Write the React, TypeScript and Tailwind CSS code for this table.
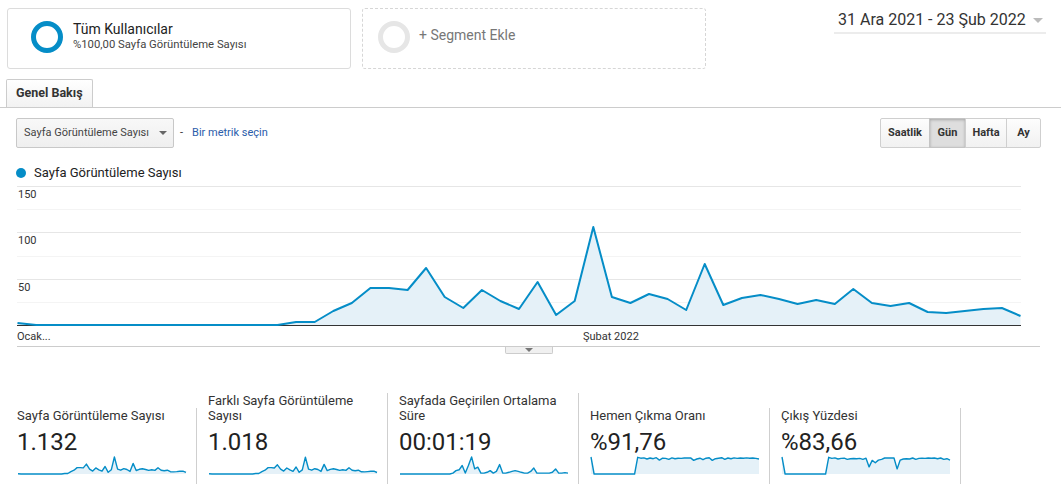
import React from "react";

const BLUE = "#058dc7";

const main = [2, 0, 0, 0, 0, 0, 0, 0, 0, 0, 0, 0, 0, 0, 0, 3, 3, 14, 22, 37, 37, 35, 57, 28, 17, 35, 24, 16, 43, 10, 24, 98, 28, 22, 31, 26, 15, 61, 20, 27, 30, 26, 21, 25, 21, 36, 22, 19, 22, 13, 12, 14, 16, 17, 9];

const card2 = main.map((v, i) => (i === 22 ? 50 : i === 28 ? 38 : i === 37 ? 52 : v * 0.93));

const card3 = [0, 0, 0, 0, 0, 0, 0, 0, 0, 0, 0, 0, 0, 0, 0, 0, 0, 0.05, 0.2, 0.25, 0.5, 0.05, 0.5, 1.0, 0.3, 0.4, 0.05, 0.05, 0.1, 0.2, 0.05, 0.15, 0.55, 0.05, 0.05, 0.1, 0.15, 0.2, 0.15, 0.1, 0.05, 0.05, 0.15, 0.35, 0.05, 0.05, 0.05, 0.05, 0.05, 0.1, 0.3, 0.05, 0.05, 0.08, 0.05];

const card4 = [1, 0, 0, 0, 0, 0, 0, 0, 0, 0, 0, 0, 0, 0, 0, 0.98, 0.93, 0.95, 0.88, 0.94, 0.9, 0.96, 0.82, 0.93, 0.92, 0.86, 0.95, 0.9, 0.93, 0.92, 0.94, 0.94, 0.95, 0.8, 0.88, 0.93, 0.84, 0.93, 0.96, 0.8, 0.9, 0.93, 0.96, 0.86, 0.94, 0.9, 0.95, 0.92, 0.94, 0.93, 0.95, 0.93, 0.94, 0.92, 0.88];

const card5 = [1, 0, 0, 0, 0, 0, 0, 0, 0, 0, 0, 0, 0, 0, 0, 0.98, 0.92, 0.95, 0.88, 0.92, 0.93, 0.86, 0.9, 0.91, 0.9, 0.92, 0.86, 0.93, 0.42, 0.8, 0.66, 0.82, 0.86, 0.94, 0.94, 0.94, 0.94, 0.3, 0.82, 0.88, 0.9, 0.88, 0.94, 0.86, 0.92, 0.93, 0.92, 0.94, 0.93, 0.94, 0.9, 0.94, 0.86, 0.9, 0.82];

function build(vals: number[], w: number, x0: number, base: number, scale: number) {
  const n = vals.length;
  const step = w / (n - 1);
  const pts = vals.map((v, i) => [x0 + i * step, base - v * scale]);
  const line = pts.map((q, i) => `${i ? "L" : "M"}${q[0].toFixed(1)},${q[1].toFixed(1)}`).join("");
  const area = `${line}L${(x0 + w).toFixed(1)},${base}L${x0},${base}Z`;
  return { line, area };
}

function Spark({ vals, max }: { vals: number[]; max: number }) {
  const { line, area } = build(vals, 168, 1, 18, 17 / max);
  return (
    <svg width="170" height="20" viewBox="0 0 170 20" className="block">
      <path d={area} fill="#e5f1f8" />
      <path d={line} fill="none" stroke={BLUE} strokeWidth="1.4" strokeLinejoin="round" />
    </svg>
  );
}

function Card({ title, value, children }: { title: string; value: string; children: React.ReactNode }) {
  return (
    <div className="w-[191px] border-r border-[#cfcfcf] pl-[11px] pr-[9px] pb-[8px]">
      <div className="text-[13px] leading-[15px] text-[#333]">{title}</div>
      <div className="mt-[5px] text-[24px] leading-[28px] text-[#222]">{value}</div>
      {children}
    </div>
  );
}

function MainChart() {
  const { line, area } = build(main, 1003, 0.5, 139, 1);
  const grid = [
    { y: 0.5, c: "#e6e6e6" },
    { y: 23.5, c: "#f4f4f4" },
    { y: 46.5, c: "#e6e6e6" },
    { y: 70.5, c: "#f4f4f4" },
    { y: 93.5, c: "#e6e6e6" },
    { y: 116.5, c: "#f4f4f4" },
  ];
  return (
    <svg width="1004" height="140" viewBox="0 0 1004 140" className="block">
      {grid.map((g) => (
        <line key={g.y} x1="0" x2="1004" y1={g.y} y2={g.y} stroke={g.c} strokeWidth="1" />
      ))}
      <path d={area} fill="#e5f1f8" />
      <line x1="0" x2="1004" y1="139.5" y2="139.5" stroke="#333" strokeWidth="1" />
      <path d={line} fill="none" stroke={BLUE} strokeWidth="2" strokeLinejoin="round" />
    </svg>
  );
}

export default function App() {
  return (
    <div className="w-[1061px] h-[502px] bg-white overflow-hidden font-['Roboto','Liberation_Sans',sans-serif] text-[#333]">
      {/* top row */}
      <div className="flex items-start pt-[8px] pl-[7px]">
        <div className="w-[344px] h-[61px] border border-[#dcdcdc] rounded-[3px] flex items-start pt-[11px] pl-[23px]">
          <div className="mt-[1px] w-[32px] h-[32px] rounded-full border-[5px] border-[#058dc7]" />
          <div className="ml-[10px]">
            <div className="text-[14px] leading-[18px] text-[#222]">Tüm Kullanıcılar</div>
            <div className="text-[11.3px] leading-[13px] text-[#444]">%100,00 Sayfa Görüntüleme Sayısı</div>
          </div>
        </div>
        <div className="ml-[11px] w-[344px] h-[61px] border border-dashed border-[#d6d6d6] rounded-[3px] flex items-start pt-[12px] pl-[15px]">
          <div className="w-[32px] h-[32px] rounded-full border-[5px] border-[#e6e6e6]" />
          <div className="ml-[9px] mt-[5px] text-[14px] leading-[18px] text-[#777]">+ Segment Ekle</div>
        </div>
        <div className="ml-auto mr-[15px] mt-[2px] w-[212px] h-[24px] border-b-2 border-[#ececec] flex items-start pl-[4px]">
          <span className="whitespace-nowrap text-[16px] leading-[19px] text-[#333]">31 Ara 2021 - 23 Şub 2022</span>
          <span className="ml-auto mr-[3px] mt-[8px] w-0 h-0 border-l-[5px] border-r-[5px] border-t-[5px] border-l-transparent border-r-transparent border-t-[#bbb]" />
        </div>
      </div>

      {/* tabs */}
      <div className="mt-[10px] border-b border-[#cccccc] pl-[6px] flex">
        <div className="h-[28px] px-[9px] border border-b-0 border-[#cccccc] rounded-t-[2px] bg-gradient-to-b from-white to-[#f2f2f2] text-[12.5px] font-bold text-[#333] flex items-center">
          Genel Bakış
        </div>
      </div>

      {/* controls */}
      <div className="mt-[10px] flex items-center pl-[16px] pr-[20px] h-[30px]">
        <div className="w-[158px] h-[30px] border border-[#c8c8c8] rounded-[2px] bg-gradient-to-b from-[#f8f8f8] to-[#efefef] flex items-center pl-[7px] text-[11px] text-[#444]">
          <span>Sayfa Görüntüleme Sayısı</span>
          <span className="ml-auto mr-[6px] w-0 h-0 border-l-[4px] border-r-[4px] border-t-[4px] border-l-transparent border-r-transparent border-t-[#666]" />
        </div>
        <span className="ml-[6px] text-[11px] text-[#333]">-</span>
        <span className="ml-[9px] text-[11px] text-[#2a5caa]">Bir metrik seçin</span>
        <div className="ml-auto flex text-[11px] font-bold text-[#333]">
          <div className="w-[50px] h-[30px] border border-[#cfcfcf] rounded-l-[2px] bg-gradient-to-b from-[#fdfdfd] to-[#f1f1f1] flex items-center justify-center">Saatlik</div>
          <div className="-ml-px w-[37px] h-[30px] border border-[#c4c4c4] bg-[#dedede] shadow-[inset_0_1px_3px_rgba(0,0,0,0.25)] flex items-center justify-center">Gün</div>
          <div className="-ml-px w-[42px] h-[30px] border border-[#cfcfcf] bg-gradient-to-b from-[#fdfdfd] to-[#f1f1f1] flex items-center justify-center">Hafta</div>
          <div className="-ml-px w-[35px] h-[30px] border border-[#cfcfcf] rounded-r-[2px] bg-gradient-to-b from-[#fdfdfd] to-[#f1f1f1] flex items-center justify-center">Ay</div>
        </div>
      </div>

      {/* legend */}
      <div className="mt-[17px] flex items-center pl-[16px] h-[16px]">
        <span className="w-[10px] h-[10px] rounded-full bg-[#058dc7]" />
        <span className="ml-[8px] text-[13px] leading-[16px] text-[#222]">Sayfa Görüntüleme Sayısı</span>
      </div>

      {/* chart */}
      <div className="mt-[5px] ml-[17px] w-[1023px] relative">
        <MainChart />
        <span className="absolute left-[1px] top-[2px] text-[11px] leading-[13px] text-[#333]">150</span>
        <span className="absolute left-[1px] top-[48px] text-[11px] leading-[13px] text-[#333]">100</span>
        <span className="absolute left-[1px] top-[95px] text-[11px] leading-[13px] text-[#333]">50</span>
        <div className="relative h-[21px] border-b border-[#cccccc] pt-[4px] text-[11px] leading-[13px] text-[#333]">
          <span>Ocak...</span>
          <span className="absolute left-[566px] top-[4px]">Şubat 2022</span>
        </div>
        <div className="absolute left-[488px] top-[161px] w-[48px] h-[7px] bg-[#f0f0f0] border border-t-0 border-[#cccccc] rounded-b-[2px] flex items-center justify-center">
          <span className="w-0 h-0 border-l-[4px] border-r-[4px] border-t-[4px] border-l-transparent border-r-transparent border-t-[#777]" />
        </div>
      </div>

      {/* scorecards */}
      <div className="mt-[46px] h-[91px] pl-[6px] flex items-end">
        <Card title="Sayfa Görüntüleme Sayısı" value="1.132">
          <Spark vals={main} max={98} />
        </Card>
        <Card title="Farklı Sayfa Görüntüleme Sayısı" value="1.018">
          <Spark vals={card2} max={92} />
        </Card>
        <Card title="Sayfada Geçirilen Ortalama Süre" value="00:01:19">
          <Spark vals={card3} max={1} />
        </Card>
        <Card title="Hemen Çıkma Oranı" value="%91,76">
          <Spark vals={card4} max={1} />
        </Card>
        <Card title="Çıkış Yüzdesi" value="%83,66">
          <Spark vals={card5} max={1} />
        </Card>
      </div>
    </div>
  );
}
